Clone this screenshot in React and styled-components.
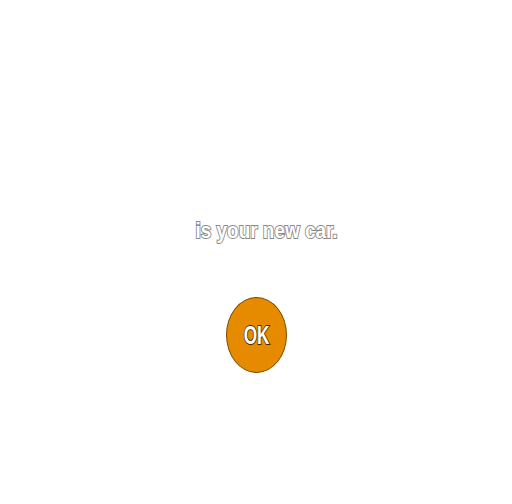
import React from 'react'
import styled, { createGlobalStyle } from 'styled-components'

const Global = createGlobalStyle`
  html, body {
    margin: 0;
    background: #fff;
  }
`

const Screen = styled.div`
  width: 512px;
  height: 504px;
  display: flex;
  flex-direction: column;
  align-items: center;
  padding-top: 216px;
  box-sizing: border-box;
`

const Message = styled.div`
  font-family: 'Liberation Sans', Arial, sans-serif;
  font-weight: bold;
  font-size: 22px;
  line-height: 30px;
  color: #fff;
  -webkit-text-stroke: 2px #8a8a8a;
  paint-order: stroke fill;
  white-space: nowrap;
  margin-left: 22px;
  transform: scaleX(0.86);
`

const OkButton = styled.button`
  margin-top: 51px;
  width: 61px;
  height: 76px;
  border-radius: 50%;
  border: 1px solid #7a4a00;
  background: #e68a00;
  display: flex;
  align-items: center;
  justify-content: center;
  padding: 0;
  cursor: pointer;
  font-family: 'Liberation Sans', Arial, sans-serif;
  font-weight: bold;
  font-size: 26px;
  line-height: 1;
  color: #fff;
  -webkit-text-stroke: 2px #4a2a00;
  paint-order: stroke fill;
`

const OkLabel = styled.span`
  display: inline-block;
  transform: scaleX(0.66);
`

export default function App() {
  return (
    <>
      <Global />
      <Screen>
        <Message>is your new car.</Message>
        <OkButton>
          <OkLabel>OK</OkLabel>
        </OkButton>
      </Screen>
    </>
  )
}
